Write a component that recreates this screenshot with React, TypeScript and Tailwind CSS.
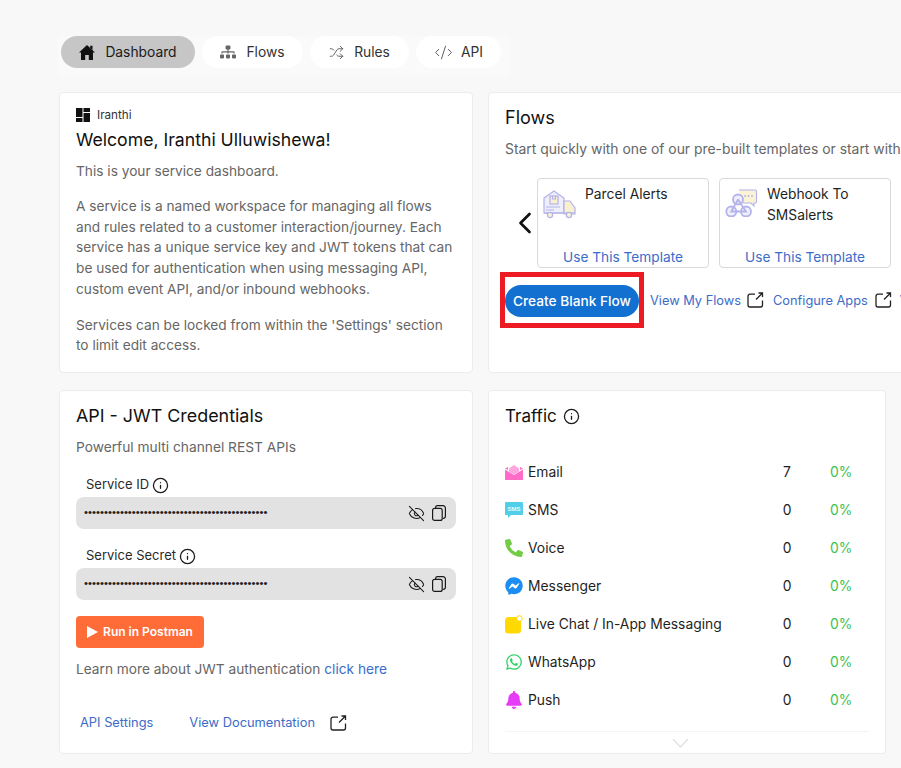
import { Shuffle, CodeXml, Info, EyeOff, ChevronLeft } from "lucide-react";
import { FaSitemap, FaWhatsapp, FaFacebookMessenger, FaBell, FaPhoneAlt } from "react-icons/fa";

function HomeIcon() {
  return (
    <svg width="16" height="15" viewBox="0 0 16 15" fill="#111" className="shrink-0">
      <path d="M8 0 16 7.500H14V15H9.800V10H6.200V15H2V7.500H0Z" />
      <path d="M11.200 .8h2.300v4.200l-2.300-2.100z" />
    </svg>
  );
}

function ExternalIcon() {
  return (
    <svg width="17" height="16" viewBox="0 0 17 16" fill="none" stroke="#222" strokeWidth="1.300" className="shrink-0">
      <path d="M8 2.200H3a2 2 0 0 0-2 2V13a2 2 0 0 0 2 2h10.500a2 2 0 0 0 2-2V8.500" />
      <path d="M9 7.500 15.500 1M11.500 1h4v4" />
    </svg>
  );
}

function CopyIcon() {
  return (
    <svg width="16" height="18" viewBox="0 0 16 18" fill="none" stroke="#1a1a1a" strokeWidth="1.200" className="shrink-0">
      <rect x="1.600" y="4.400" width="9.600" height="12" rx="2" />
      <path d="M4.600 4.200V3.400a2 2 0 0 1 2-1.800h5.400a2.400 2.400 0 0 1 2.400 2.400v8.400a2 2 0 0 1-2.600 1.800" />
    </svg>
  );
}

function LogoIcon() {
  return (
    <svg width="14" height="14" viewBox="0 0 14 14" fill="#111" className="shrink-0">
      <rect x="0" y="0" width="6.500" height="9" />
      <rect x="7.500" y="0" width="6.500" height="4" />
      <rect x="7.500" y="5" width="6.500" height="9" />
      <rect x="0" y="10" width="6.500" height="4" />
    </svg>
  );
}

function ParcelIcon() {
  return (
    <svg width="33" height="30" viewBox="0 0 33 30" fill="none" stroke="#b3b2ea" strokeWidth="1.200" className="shrink-0">
      <path d="M1 9 11 2l10 7v15H1z" fill="#efeefb" />
      <rect x="7" y="7" width="8" height="8" fill="#f9f0cf" />
      <path d="M9.500 7v3h3V7M3 18h14M3 21h8" />
      <path d="M21 12h6l5 7v6H21z" fill="#f9f0cf" />
      <path d="M1 24h31" />
      <circle cx="7" cy="26" r="2.600" fill="#fbf3d5" />
      <circle cx="26" cy="26" r="2.600" fill="#fbf3d5" />
    </svg>
  );
}

function WebhookIcon() {
  return (
    <svg width="33" height="28" viewBox="0 0 33 28" fill="none" stroke="#b3b2ea" strokeWidth="1.800" className="shrink-0">
      <path d="M14 1h16a1.500 1.500 0 0 1 1.500 1.500v10A1.500 1.500 0 0 1 30 14h-1v3l-3-3H18" fill="#fbf3d5" strokeWidth="1.100" />
      <circle cx="20" cy="7" r=".8" fill="#8f8ee0" stroke="none" />
      <circle cx="23.500" cy="7" r=".8" fill="#8f8ee0" stroke="none" />
      <circle cx="27" cy="7" r=".8" fill="#8f8ee0" stroke="none" />
      <circle cx="13" cy="10.500" r="5" fill="#efeefb" />
      <circle cx="6.300" cy="22.500" r="5" fill="#efeefb" />
      <circle cx="21" cy="22.500" r="5" fill="#efeefb" />
      <path d="M13 10.500 6.300 22.500H21L13 10.500" strokeWidth="1.800" />
    </svg>
  );
}

function MailIcon() {
  return (
    <svg width="18" height="15" viewBox="0 0 18 15">
      <path d="M9 0 14 3.500v3L9 9.500 4 6.500v-3z" fill="#ffa6dc" />
      <path d="M0 4.500 9 10l9-5.500V15H0z" fill="#ff6cc8" />
      <path d="M0 3.500 3 2v3zM18 3.500 15 2v3z" fill="#ff6cc8" />
    </svg>
  );
}

function SmsIcon() {
  return (
    <svg width="18" height="17" viewBox="0 0 18 17">
      <path d="M1 0h16a1 1 0 0 1 1 1v11a1 1 0 0 1-1 1H6l-3 3v-3H1a1 1 0 0 1-1-1V1a1 1 0 0 1 1-1z" fill="#52cfe8" />
      <text x="9" y="9" textAnchor="middle" fontSize="6" fontWeight="700" fill="#e6fbff" fontFamily="Liberation Sans, sans-serif">SMS</text>
    </svg>
  );
}

function ChatIcon() {
  return (
    <svg width="18" height="19" viewBox="0 0 18 19">
      <rect x="0" y="2" width="16" height="16.500" rx="3.500" fill="#ffd900" />
      <circle cx="14.500" cy="3.500" r="2.800" fill="#fff" stroke="#ffd900" strokeWidth="1" />
    </svg>
  );
}

const TRAFFIC = [
  { name: "Email", count: "7", icon: <MailIcon /> },
  { name: "SMS", count: "0", icon: <SmsIcon /> },
  { name: "Voice", count: "0", icon: <FaPhoneAlt className="h-[18px] w-[18px] -scale-x-100 rotate-90 text-[#72cc45]" /> },
  { name: "Messenger", count: "0", icon: <FaFacebookMessenger className="h-[18px] w-[18px] text-[#1c8ef2]" /> },
  { name: "Live Chat / In-App Messaging", count: "0", icon: <ChatIcon /> },
  { name: "WhatsApp", count: "0", icon: <FaWhatsapp className="h-[18px] w-[18px] text-[#2fd366]" /> },
  { name: "Push", count: "0", icon: <FaBell className="h-[18px] w-[18px] text-[#e63cf5]" /> },
];

function Pill({ label, active, icon, w, gap }: { label: string; active?: boolean; icon: React.ReactNode; w: string; gap: string }) {
  return (
    <div className={`flex h-8 items-center justify-center rounded-full text-[13.8px] ${gap} ${w} ${active ? "bg-[#c6c6c6] text-[#1a1a1a]" : "bg-white text-[#333]"}`}>
      {icon}
      <span>{label}</span>
    </div>
  );
}

function TemplateCard({ title, icon }: { title: React.ReactNode; icon: React.ReactNode }) {
  return (
    <div className="flex h-[90px] w-[172px] shrink-0 flex-col rounded border border-[#d9d9d9] bg-white">
      <div className="flex flex-1 gap-[9px] pl-[5px] pt-[5px]">
        <div className="pt-[5px]">{icon}</div>
        <div className="text-[13.8px] leading-[21px] text-[#1f1f1f]">{title}</div>
      </div>
      <div className="text-center text-[13.7px] leading-[19px] text-[#3b6cc9]">Use This Template</div>
    </div>
  );
}

function Credential({ label }: { label: string }) {
  return (
    <div>
      <div className="flex h-[20px] items-center gap-[3px] pl-[10px] pt-[2px] text-[13px] text-[#2a2a2a]">
        <span>{label}</span>
        <Info size={17} strokeWidth={1.800} className="text-[#1a1a1a]" />
      </div>
      <div className="mt-[3px] flex h-8 items-center justify-between rounded-lg bg-[#e2e2e2] pl-2 pr-[9px]">
        <span className="font-['Liberation_Sans',sans-serif] text-[11.4px] leading-none text-[#222]">
          {"•".repeat(46)}
        </span>
        <div className="flex items-center gap-[6px]">
          <EyeOff size={17} strokeWidth={1.500} className="text-[#1a1a1a]" />
          <CopyIcon />
        </div>
      </div>
    </div>
  );
}

export default function App() {
  return (
    <div className="h-[768px] w-[901px] overflow-hidden bg-[#f8f8f8] font-['Inter',sans-serif]">
      <div className="pt-[36px]">
        <div className="ml-[58px] flex w-fit gap-[7px] bg-[#fafafa] pb-2 pl-[3px] pr-[9px]">
          <Pill label="Dashboard" active w="w-[134px]" gap="gap-[10px]" icon={<HomeIcon />} />
          <Pill label="Flows" w="w-[101px]" gap="gap-[10px]" icon={<FaSitemap className="h-4 w-4 text-[#666]" />} />
          <Pill label="Rules" w="w-[99px]" gap="gap-[10px]" icon={<Shuffle size={15} strokeWidth={1.400} className="text-[#555]" />} />
          <Pill label="API" w="w-[85px]" gap="gap-[8px]" icon={<CodeXml size={19} strokeWidth={1.200} className="text-[#555]" />} />
        </div>
      </div>

      <div className="mt-[16px] flex gap-[15px] pl-[59px]">
        <div className="h-[281px] w-[414px] shrink-0 rounded border border-[#ececec] bg-white px-4 pt-[15px]">
          <div className="flex items-center gap-[7px] text-[11.7px] leading-[14px] text-[#333]">
            <LogoIcon />
            <span>Iranthi</span>
          </div>
          <h1 className="mt-[5px] text-[17.65px] leading-[26px] text-[#111]">Welcome, Iranthi Ulluwishewa!</h1>
          <div className="mt-[8px] text-[13.7px] leading-[20.75px] text-[#666]">
            <p>This is your service dashboard.</p>
            <p className="mt-[14px]">
              A service is a named workspace for managing all flows and rules related to a customer interaction/journey. Each service has a unique service key and JWT tokens that can be used for authentication when using messaging API, custom event API, and/or inbound webhooks.
            </p>
            <p className="mt-[15px]">Services can be locked from within the 'Settings' section to limit edit access.</p>
          </div>
        </div>

        <div className="h-[281px] w-[440px] shrink-0 rounded border border-[#ececec] bg-white pl-4 pt-[12px]">
          <h2 className="text-lg leading-[26px] text-[#111]">Flows</h2>
          <p className="mt-[8px] whitespace-nowrap text-[13.9px] leading-[21px] text-[#666]">
            Start quickly with one of our pre-built templates or start with a blank flow
          </p>
          <div className="mt-[18px] flex items-center">
            <div className="flex w-[32px] shrink-0 justify-center pl-[8px]">
              <ChevronLeft size={36} strokeWidth={1.800} className="shrink-0 text-[#111]" />
            </div>
            <div className="flex gap-[10px]">
              <TemplateCard title="Parcel Alerts" icon={<ParcelIcon />} />
              <TemplateCard title={<>Webhook To<br />SMSalerts</>} icon={<WebhookIcon />} />
            </div>
          </div>
          <div className="mt-[4px] flex items-center">
            <div className="-ml-[5px] flex h-[56px] w-[144px] shrink-0 items-start justify-center border-[5px] border-[#ed1c24] pt-[8px]">
              <div className="flex h-8 w-[134px] items-center justify-center whitespace-nowrap rounded-full bg-[#1170d0] text-[13.7px] font-medium text-white">
                Create Blank Flow
              </div>
            </div>
            <span className="ml-[6px] mt-[2px] whitespace-nowrap text-[12.8px] text-[#3b6cc9]">View My Flows</span>
            <span className="ml-[6px]"><ExternalIcon /></span>
            <span className="ml-[9px] mt-[2px] whitespace-nowrap text-[12.8px] text-[#3b6cc9]">Configure Apps</span>
            <span className="ml-[7px]"><ExternalIcon /></span>
            <span className="ml-[8px] mt-[2px] whitespace-nowrap text-[12.8px] text-[#3b6cc9]">View Docs</span>
          </div>
        </div>
      </div>

      <div className="mt-[17px] flex gap-[15px] pl-[59px]">
        <div className="h-[364px] w-[414px] shrink-0 rounded border border-[#ececec] bg-white px-4 pt-[12px]">
          <h2 className="text-[17.9px] leading-[26px] text-[#111]">API - JWT Credentials</h2>
          <p className="mt-[8px] text-[13.75px] leading-[21px] text-[#666]">Powerful multi channel REST APIs</p>
          <div className="mt-[16px] flex flex-col gap-[16px]">
            <Credential label="Service ID" />
            <Credential label="Service Secret" />
          </div>
          <div className="mt-[16px] flex h-8 w-[128px] items-center justify-center gap-[5px] rounded bg-[#ff6c37] text-xs font-semibold text-white">
            <svg width="11" height="12" viewBox="0 0 11 12" fill="#fff"><path d="M0 0 11 6 0 12z" /></svg>
            <span>Run in Postman</span>
          </div>
          <p className="mt-[11px] text-[13.7px] leading-[21px] text-[#666]">
            Learn more about JWT authentication <span className="text-[#3b6cc9]">click here</span>
          </p>
          <div className="mt-[33px] flex items-center pl-1 text-[12.85px] text-[#3b6cc9]">
            <span>API Settings</span>
            <span className="ml-[36px]">View Documentation</span>
            <span className="ml-[15px]"><ExternalIcon /></span>
          </div>
        </div>

        <div className="flex h-[364px] w-[398px] shrink-0 flex-col rounded border border-[#ececec] bg-white px-4 pt-[12px]">
          <div className="flex items-center gap-[6px]">
            <h2 className="text-[17px] leading-[26px] text-[#111]">Traffic</h2>
            <Info size={17} strokeWidth={1.800} className="text-[#1a1a1a]" />
          </div>
          <div className="mt-[24px] flex flex-col">
            {TRAFFIC.map((t) => (
              <div key={t.name} className="flex h-[38px] items-center text-[13.85px] text-[#1f1f1f]">
                <div className="flex w-[23px] shrink-0 items-center">{t.icon}</div>
                <span className="w-[226px] shrink-0 whitespace-nowrap">{t.name}</span>
                <span className="w-[66px] shrink-0 text-center">{t.count}</span>
                <span className="ml-[10px] text-[#3cc34d]">0%</span>
              </div>
            ))}
          </div>
          <div className="mt-[12px] flex justify-center border-t border-[#f4f4f4] pr-[14px] pt-[6px]">
            <svg width="17" height="10" viewBox="0 0 17 10" fill="none" stroke="#e2e2e2" strokeWidth="1.300"><path d="M1 1 8.500 9 16 1" /></svg>
          </div>
        </div>
      </div>
    </div>
  );
}
